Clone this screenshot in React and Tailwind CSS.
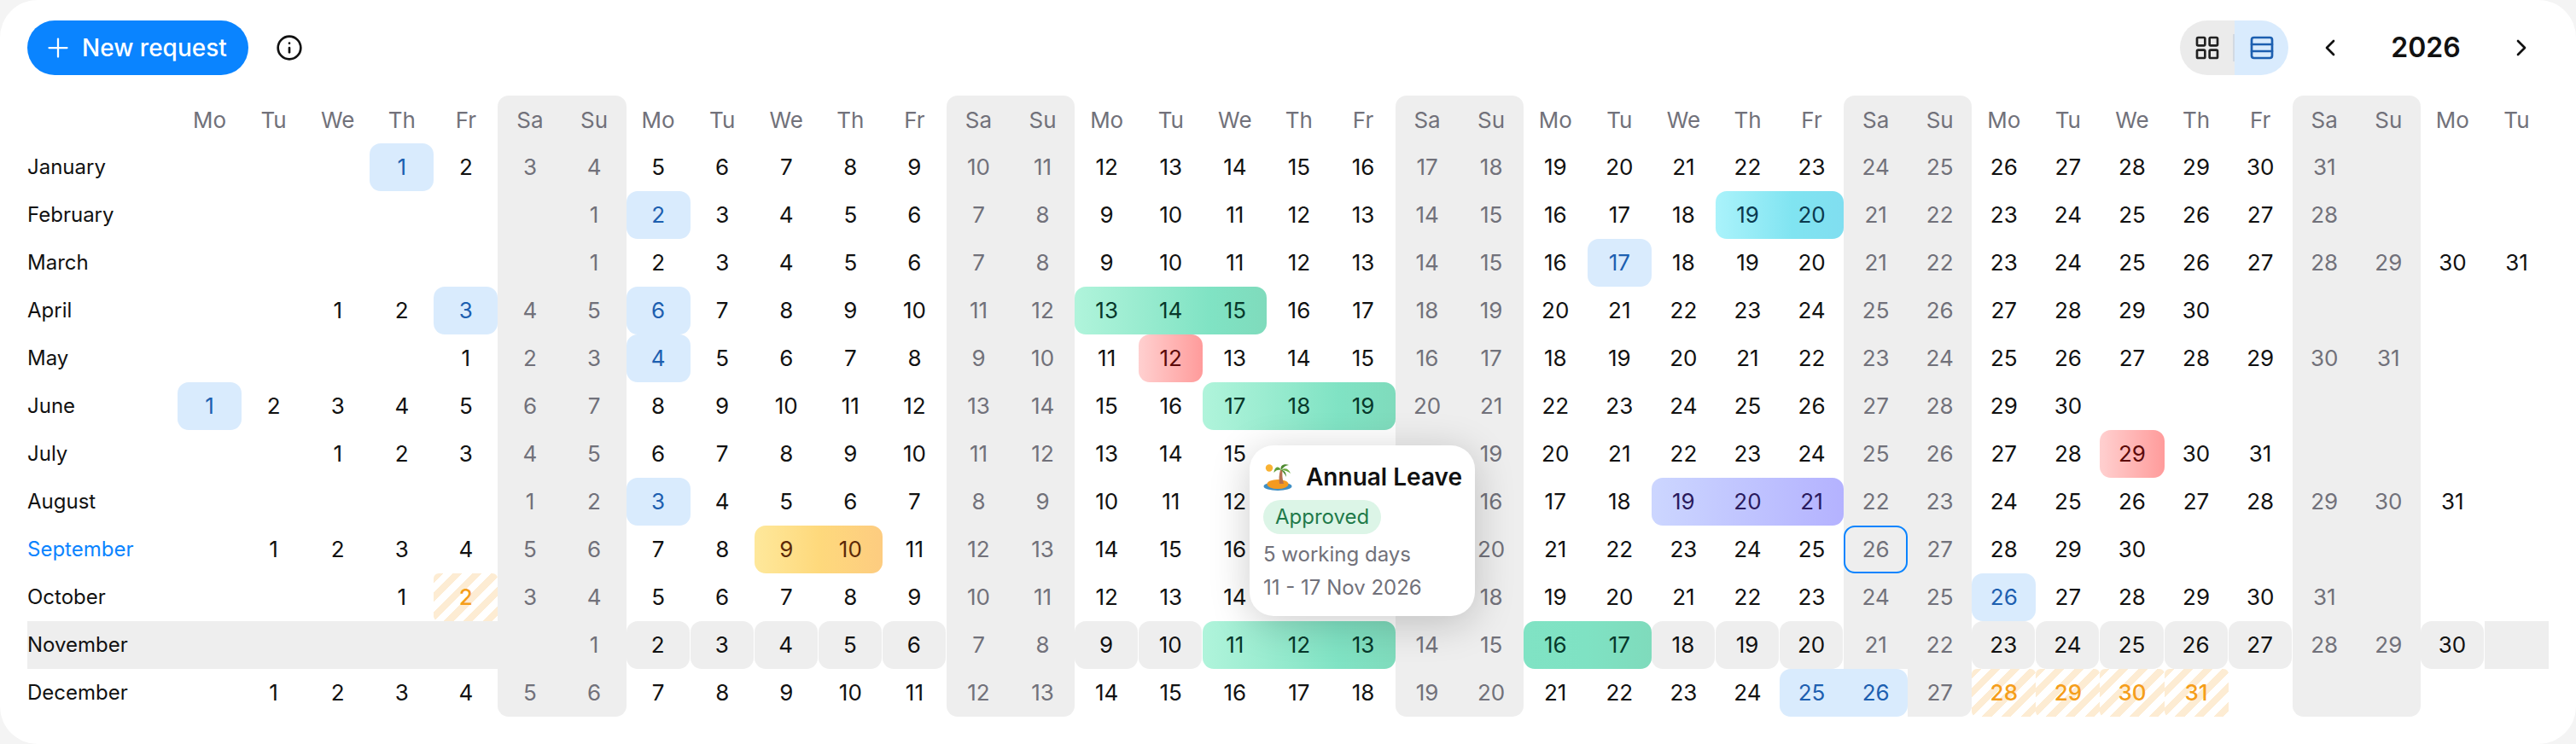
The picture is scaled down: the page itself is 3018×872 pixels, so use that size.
import React from "react";
import { ChevronLeft, ChevronRight, Info, LayoutGrid, Plus, Rows3 } from "lucide-react";

const MONTHS = ["January", "February", "March", "April", "May", "June", "July", "August", "September", "October", "November", "December"];
const DAY_NAMES = ["Mo", "Tu", "We", "Th", "Fr", "Sa", "Su"];
const COLS = 37;

const KIND = {
  holiday: "bg-[#d9ebfd] text-[#1d5fb0]",
  green: "bg-linear-to-r from-[#b0f4db] via-[#80e3c4] via-70% to-[#7fdbbc] text-[#07382b]",
  greenDark: "bg-linear-to-r from-[#80e3c4] via-[#7fe2c3] to-[#7fdbbc] text-[#07382b]",
  cyan: "bg-linear-to-r from-[#aaf3fb] via-[#80e4f1] via-60% to-[#80def0] text-[#0b3a4f]",
  yellow: "bg-linear-to-r from-[#fee89b] via-[#fed97c] via-50% to-[#fdcc80] text-[#5c2a08]",
  purple: "bg-linear-to-r from-[#ccd6ff] to-[#b4b2ff] text-[#2a1a5e]",
  red: "bg-linear-to-r from-[#ffd0d0] to-[#ff9b9b] text-[#5c0a0a]",
};

// month index -> [first day, last day, kind]
const EVENTS = {
  0: [[1, 1, "holiday"]],
  1: [[2, 2, "holiday"], [19, 20, "cyan"]],
  2: [[17, 17, "holiday"]],
  3: [[3, 3, "holiday"], [6, 6, "holiday"], [13, 15, "green"]],
  4: [[4, 4, "holiday"], [12, 12, "red"]],
  5: [[1, 1, "holiday"], [17, 19, "green"]],
  6: [[29, 29, "red"]],
  7: [[3, 3, "holiday"], [19, 21, "purple"]],
  8: [[9, 10, "yellow"]],
  9: [[26, 26, "holiday"]],
  10: [[11, 13, "green"], [16, 17, "greenDark"]],
  11: [[25, 26, "holiday"]],
};

const PENDING = { 9: [2], 11: [28, 29, 30, 31] };
const STRIPES = "bg-[repeating-linear-gradient(135deg,#fdecd3_0px,#fdecd3_8px,#ffffff_8px,#ffffff_16px)] text-[#f59e1b] font-medium";

function isWeekend(col) {
  return col % 7 === 5 || col % 7 === 6;
}

function buildSlots(month) {
  const first = (new Date(2026, month, 1).getDay() + 6) % 7;
  const count = new Date(2026, month + 1, 0).getDate();
  const slots = [];
  for (let col = 0; col < COLS; col++) {
    const day = col - first + 1;
    slots.push(day >= 1 && day <= count ? day : null);
  }
  return slots;
}

function DayCell({ month, day, col }) {
  const weekend = isWeekend(col);
  const hovered = month === 10;
  const last = month === 11;
  const pending = PENDING[month]?.includes(day);
  const today = month === 8 && day === 26;

  let cls = "flex items-center justify-center h-14 ";
  if (!today) cls += "pb-0.5 ";
  if (weekend) {
    cls += "bg-[#eeeeee] text-[#71717a] ";
    if (last && col % 7 === 5) cls += "rounded-bl-[13px] ";
    if (last && col % 7 === 6) cls += "rounded-br-[13px] ";
  } else if (hovered && day) {
    cls += "bg-[#eeeeee] text-[#111111] rounded-[13px] mr-px ";
  } else if (hovered) {
    cls += "bg-[#eeeeee] ";
  } else {
    cls += "text-[#111111] ";
  }
  if (pending) {
    cls += STRIPES + " rounded-[6px] ";
  }

  return (
    <div className={cls}>
      {today ? (
        <span className="flex items-center justify-center w-full h-full pb-0.5 rounded-[13px] border-2 border-[#0a84ff]">{day}</span>
      ) : (
        day
      )}
    </div>
  );
}

function MonthRow({ month }) {
  const slots = buildSlots(month);
  const events = EVENTS[month] || [];
  const cells = [];
  let col = 0;

  while (col < COLS) {
    const day = slots[col];
    const ev = day && events.find((e) => e[0] === day);
    if (ev) {
      const span = ev[1] - ev[0] + 1;
      const gridSpan = ["col-span-1", "col-span-2", "col-span-3"][span - 1];
      const inner = ["grid-cols-1", "grid-cols-2", "grid-cols-3"][span - 1];
      cells.push(
        <div key={col} className={`${gridSpan} grid ${inner} h-14 pb-0.5 rounded-[13px] items-center text-center ${KIND[ev[2]]}`}>
          {slots.slice(col, col + span).map((d) => (
            <span key={d}>{d}</span>
          ))}
        </div>
      );
      col += span;
    } else {
      cells.push(<DayCell key={col} month={month} day={day} col={col} />);
      col += 1;
    }
  }

  const labelCls =
    month === 8 ? "text-[#0a84ff]" : month === 10 ? "bg-[#eeeeee] text-[#111111]" : "text-[#111111]";

  return (
    <div className="grid grid-cols-[176px_repeat(37,minmax(0,1fr))]">
      <div className={`flex items-center h-14 text-[24px] ${labelCls}`}>{MONTHS[month]}</div>
      {cells}
    </div>
  );
}

function HeaderRow() {
  const cols = [];
  for (let col = 0; col < COLS; col++) {
    let cls = "flex items-center justify-center h-14 text-[#71717a] ";
    if (col % 7 === 5) cls += "bg-[#eeeeee] rounded-tl-[13px]";
    if (col % 7 === 6) cls += "bg-[#eeeeee] rounded-tr-[13px]";
    cols.push(
      <div key={col} className={cls}>
        {DAY_NAMES[col % 7]}
      </div>
    );
  }
  return (
    <div className="grid grid-cols-[176px_repeat(37,minmax(0,1fr))]">
      <div />
      {cols}
    </div>
  );
}

function IslandIcon() {
  return (
    <svg width="34" height="34" viewBox="0 0 34 34" className="shrink-0">
      <circle cx="7" cy="6.5" r="4.2" fill="#f9b233" />
      <ellipse cx="17" cy="28" rx="16.5" ry="5" fill="#3f8fc4" />
      <ellipse cx="17" cy="25.5" rx="12.5" ry="5.5" fill="#f39a1f" />
      <path d="M20 9c-1.6 5-1.8 11-1 16h5c-1.6-5-2-11-1.4-16z" fill="#b5714f" />
      <path d="M21 9C18 3 13 5 12.500 12c2-3 5-4 8.500-3z" fill="#5f9e3a" />
      <path d="M21 9c-2-5 3-8 9-6-3 0-6 2-9 6z" fill="#4d8a2f" />
      <path d="M21 9c4-3 9-2 11 4-3-2.500-7-4-11-4z" fill="#6bab3e" />
      <path d="M21 9c3 0 6 2 6 8-1.500-3-3.500-6-6-8z" fill="#4d8a2f" />
    </svg>
  );
}

function LeaveTooltip() {
  return (
    <div className="absolute left-[1464px] top-[522px] w-[264px] h-[200px] px-4 pt-5 rounded-[28px] bg-white shadow-[0_8px_48px_rgba(0,0,0,0.2)] z-10">
      <div className="flex items-center gap-4 h-[34px]">
        <IslandIcon />
        <span className="text-[28px] font-semibold text-[#111111] whitespace-nowrap">Annual Leave</span>
      </div>
      <span className="inline-flex items-center h-10 mt-[10px] px-[14px] rounded-full bg-[#dcf5e7] text-[#1f7a4a] text-[24px]">Approved</span>
      <p className="mt-[4px] text-[24px] leading-[39px] text-[#71717a] whitespace-nowrap">5 working days</p>
      <p className="text-[24px] leading-[39px] text-[#71717a] whitespace-nowrap">11 - 17 Nov 2026</p>
    </div>
  );
}

export default function App() {
  return (
    <div className="bg-[#f4f4f4] font-['Inter',sans-serif]">
      <div className="relative bg-white rounded-[44px] h-[872px] px-8 pt-6 overflow-hidden text-[26px]">
        {/* TOP BAR */}
        <div className="flex items-center justify-between h-16 mb-6">
          <div className="flex items-center">
            <button className="flex items-center gap-[10px] h-16 pl-[18px] pr-[25px] rounded-full bg-[#0a84ff] text-white text-[28px] font-medium">
              <Plus size={36} strokeWidth={1.5} />
              New request
            </button>
            <Info size={32} strokeWidth={2} className="ml-8 text-[#111111]" />
          </div>

          <div className="flex items-center pr-4">
            <div className="flex h-16">
              <div className="relative flex items-center justify-center w-[64px] rounded-l-full bg-[#ebebeb]">
                <LayoutGrid size={32} strokeWidth={2} className="text-[#222222]" />
                <span className="absolute right-0 top-4 w-[2px] h-8 bg-[#d2d9e2]" />
              </div>
              <div className="flex items-center justify-center w-[63px] rounded-r-full bg-[#d9ebfd]">
                <Rows3 size={32} strokeWidth={2} className="text-[#1d5fb0]" />
              </div>
            </div>
            <ChevronLeft size={32} strokeWidth={2} className="ml-[33px] text-[#111111]" />
            <div className="w-[192px] text-center text-[32px] font-semibold text-[#111111]">2026</div>
            <ChevronRight size={32} strokeWidth={2} className="text-[#111111]" />
          </div>
        </div>

        {/* CALENDAR */}
        <HeaderRow />
        {MONTHS.map((_, i) => (
          <MonthRow key={i} month={i} />
        ))}

        <LeaveTooltip />
      </div>
    </div>
  );
}
